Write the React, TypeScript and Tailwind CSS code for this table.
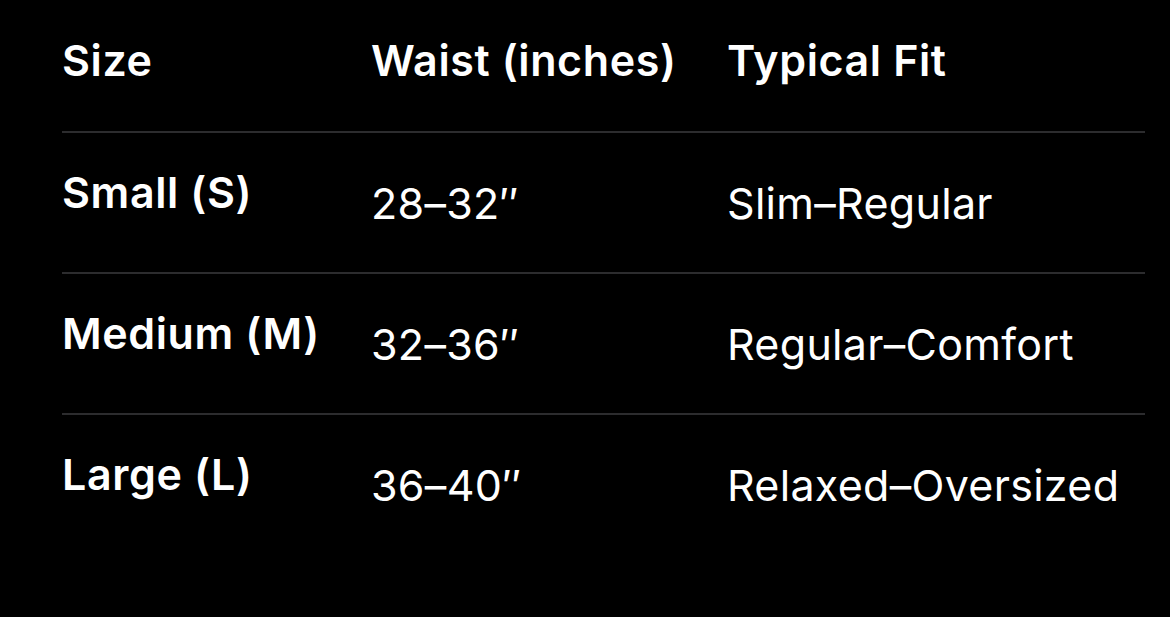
import React from "react";

const rows = [
  { size: "Small (S)", waist: "28–32″", fit: "Slim–Regular" },
  { size: "Medium (M)", waist: "32–36″", fit: "Regular–Comfort" },
  { size: "Large (L)", waist: "36–40″", fit: "Relaxed–Oversized" },
];

export default function App() {
  return (
    <div
      className="min-h-[617px] w-[1170px] bg-black text-white pl-[62px] pr-[25px]"
      style={{ fontFamily: "Inter, 'Liberation Sans', sans-serif" }}
    >
      {/* header */}
      <div className="flex h-[131px] pt-[36px] text-[43px] leading-[48px] font-semibold tracking-[0.6px]">
        <div className="w-[309px]">Size</div>
        <div className="w-[356px]">Waist (inches)</div>
        <div className="flex-1">Typical Fit</div>
      </div>

      {rows.map((r) => (
        <div key={r.size} className="flex h-[141px] border-t-2 border-[#2c2c2e] text-[43px] leading-[48px]">
          <div className="w-[309px] pt-[35px] font-semibold tracking-[0.6px]">{r.size}</div>
          <div className="w-[356px] pt-[46px] font-normal tracking-[0.3px]">{r.waist}</div>
          <div className="flex-1 pt-[46px] font-normal tracking-[0.3px]">{r.fit}</div>
        </div>
      ))}
    </div>
  );
}
